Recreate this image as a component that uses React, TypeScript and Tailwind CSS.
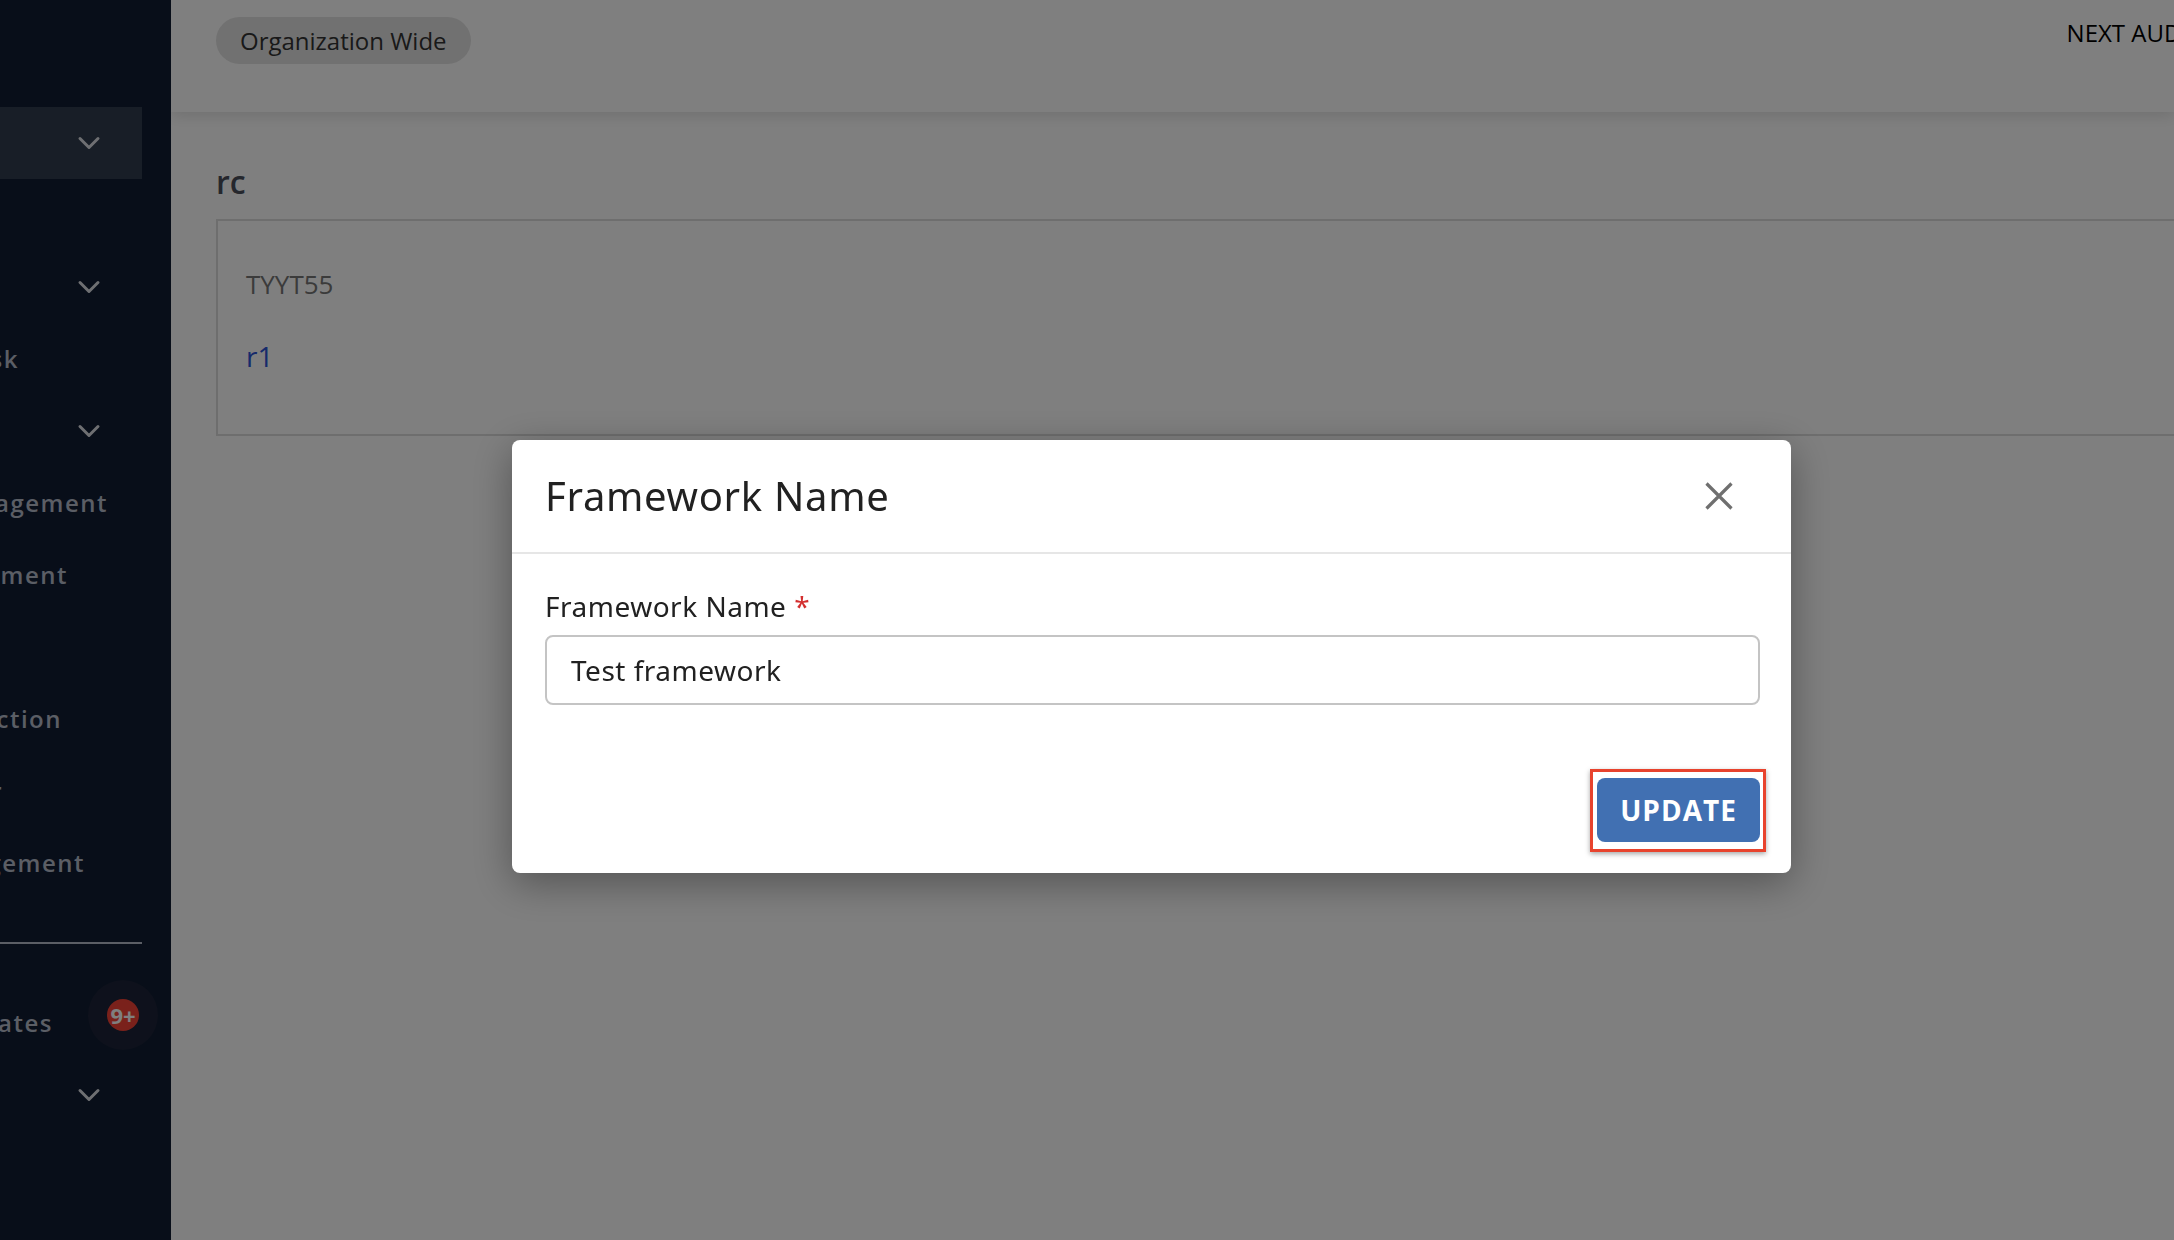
import React from "react";
import { ChevronDown } from "lucide-react";

type NavItem = {
  label: string;
  end: string;
  chevron?: boolean;
  active?: boolean;
  badge?: string;
};

// labels are right-aligned to where the sidebar (scrolled) cuts them
const mainNav: NavItem[] = [
  { label: "Home", end: "w-0", chevron: true, active: true },
  { label: "Audits", end: "w-0" },
  { label: "Controls", end: "w-0", chevron: true },
  { label: "Task", end: "w-[19px]" },
  { label: "Reports", end: "w-0", chevron: true },
  { label: "Policy Management", end: "w-[108px]" },
  { label: "Assessment", end: "w-[68px]" },
  { label: "Users", end: "w-0" },
  { label: "Data Protection", end: "w-[62px]" },
  { label: "Vendor", end: "w-[3px]" },
  { label: "Incident Management", end: "w-[85px]" },
];

const bottomNav: NavItem[] = [
  { label: "Updates", end: "w-[53px]", badge: "9+" },
  { label: "Settings", end: "w-0", chevron: true },
];

const NavRow = ({ item }: { item: NavItem }) => (
  <div
    className={`relative flex h-[72px] w-[142px] items-center ${
      item.active ? "bg-[#303c4e]" : ""
    }`}
  >
    <div className={`flex shrink-0 justify-end ${item.end}`}>
      <span className="shrink-0 whitespace-nowrap text-[24px] font-semibold leading-[32px] tracking-[1.5px] text-[#b6bdcb]">
        {item.label}
      </span>
    </div>
    {item.chevron && (
      <ChevronDown
        size={36}
        strokeWidth={2}
        className="ml-auto mr-[35px] text-[#dcdfe4]"
      />
    )}
    {item.badge && (
      <div className="absolute left-[88px] top-[-7px] flex h-[70px] w-[70px] items-center justify-center rounded-full bg-[#1c2338]">
        <span className="flex h-[32px] w-[32px] items-center justify-center rounded-full bg-[#f44336] text-[22px] font-bold leading-none text-white">
          {item.badge}
        </span>
      </div>
    )}
  </div>
);

const Sidebar = () => (
  <aside className="w-[171px] shrink-0 overflow-hidden bg-[#101c32] pt-[107px]">
    {mainNav.map((item) => (
      <NavRow key={item.label} item={item} />
    ))}
    <div className="my-[43px] h-[2px] w-[142px] bg-[#b6bdcb]" />
    {bottomNav.map((item) => (
      <NavRow key={item.label} item={item} />
    ))}
  </aside>
);

const TopBar = () => (
  <header className="relative z-10 flex h-[112px] shrink-0 items-start overflow-hidden bg-white pl-[45px] pt-[17px] shadow-[0_4px_14px_rgba(0,0,0,0.12)]">
    <div className="flex h-[47px] shrink-0 items-center rounded-full bg-[#e3e3e3] px-[24px] text-[24px] text-[#333]">
      Organization Wide
    </div>
    <span className="ml-[1596px] shrink-0 whitespace-nowrap text-[24px] leading-[32px] text-black">
      NEXT AUDIT DATE: 12/31/2024
    </span>
  </header>
);

const Content = () => (
  <div className="flex-1 overflow-hidden pl-[45px] pt-[48px]">
    <h2 className="text-[32px] font-semibold leading-[44px] text-[#4a4f5a]">
      rc
    </h2>
    <div className="mr-[-40px] mt-[15px] h-[217px] border-2 border-[#dcdcdc] pl-[28px] pt-[44px]">
      <div className="text-[26px] leading-[38px] text-[#767676]">TYYT55</div>
      <a className="mt-[33px] block text-[28px] leading-[40px] text-[#2c55d6]">
        r1
      </a>
    </div>
  </div>
);

const FrameworkModal = () => (
  <div className="fixed inset-0 z-50 flex items-center justify-center bg-black/50">
    <div className="ml-[129px] mt-[73px] w-[1279px] rounded-[8px] bg-white font-['Noto_Sans',sans-serif] shadow-[0_10px_40px_rgba(0,0,0,0.35)]">
      <div className="flex h-[114px] items-center border-b-2 border-[#e6e6e6] pl-[33px] pr-[31px]">
        <h3 className="text-[40px] leading-[56px] tracking-[0.7px] text-[#212121]">
          Framework Name
        </h3>
        <button className="ml-auto mr-[27px] text-[#6f6f6f]">
          <svg width="28" height="28" viewBox="0 0 28 28">
            <path
              d="M1.5 1.5 26.5 26.5 M26.5 1.5 1.5 26.5"
              stroke="currentColor"
              strokeWidth="3.2"
            />
          </svg>
        </button>
      </div>
      <div className="pl-[33px] pr-[31px] pt-[32px]">
        <label className="block text-[28px] leading-[40px] tracking-[0.5px] text-[#212121]">
          Framework Name <span className="text-[#d32f2f]">*</span>
        </label>
        <input
          readOnly
          value="Test framework"
          className="mt-[9px] h-[70px] w-full rounded-[8px] border-2 border-[#c4c4c4] px-[24px] font-['Noto_Sans',sans-serif] text-[28px] tracking-[0.5px] text-[#212121] outline-none"
        />
      </div>
      <div className="flex justify-end pb-[31px] pl-[33px] pr-[31px] pt-[73px]">
        <div className="relative">
          <button className="h-[64px] w-[163px] rounded-[8px] bg-[#4170b2] font-['Open_Sans',sans-serif] text-[28px] font-bold tracking-[1px] text-white">
            UPDATE
          </button>
          <div className="pointer-events-none absolute -bottom-[10px] -left-[7px] -right-[6px] -top-[9px] border-[3px] border-[#e8432d] shadow-[0_2px_5px_rgba(0,0,0,0.35)]" />
        </div>
      </div>
    </div>
  </div>
);

export default function App() {
  return (
    <div className="flex h-[1240px] w-[2174px] overflow-hidden font-['Open_Sans',sans-serif]">
      <Sidebar />
      <main className="flex min-w-0 flex-1 flex-col overflow-hidden bg-white">
        <TopBar />
        <Content />
      </main>
      <FrameworkModal />
    </div>
  );
}
